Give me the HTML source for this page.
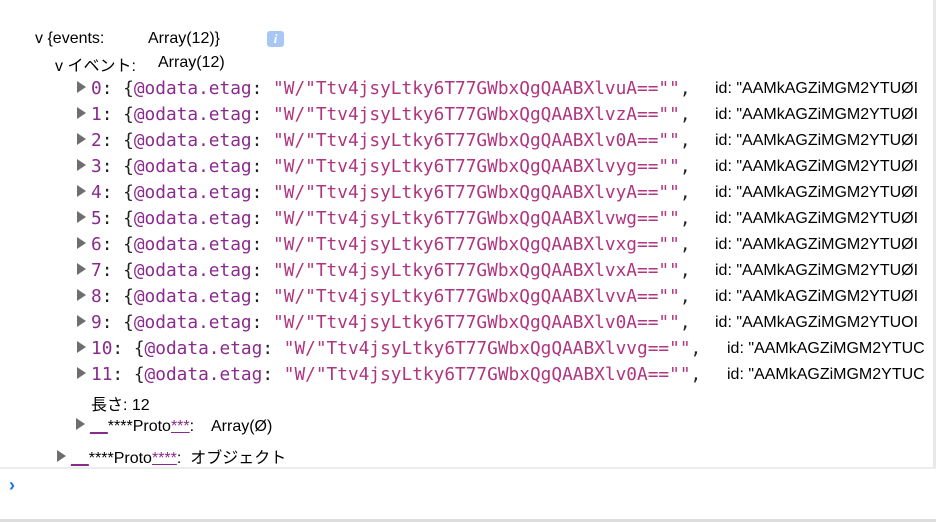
<!DOCTYPE html>
<html><head><meta charset="utf-8"><style>
body{margin:0;width:936px;height:522px;background:#fff;position:relative;overflow:hidden;font-family:"Liberation Sans","Noto Sans CJK JP",sans-serif;color:#000}
.a{position:absolute;white-space:pre}
.s{font-size:16px}
.m{font-family:"DejaVu Sans Mono","Liberation Mono",monospace;font-size:17.8px;color:#222}
.k{color:#8a2a8e}.st{color:#b0357f}
.tri{display:inline-block;width:0;height:0;border-left:9px solid #6e6e6e;border-top:6px solid transparent;border-bottom:6px solid transparent;margin-right:5px;vertical-align:1px}
.id{font-size:16px}
.u{color:#8a2a8e;text-decoration:underline}
</style></head><body>
<div class="a s" style="left:35px;top:30px">v {events:</div>
<div class="a s" style="left:148px;top:30px">Array(12)}</div>
<div style="position:absolute;left:267px;top:31px;width:17px;height:16px;background:#a9c7f5;border-radius:3px;color:#fff;font-size:13px;font-style:italic;text-align:center;line-height:16px;font-family:'Liberation Serif',serif;font-weight:bold">i</div>
<div class="a s" style="left:55px;top:52px">v イベント:</div>
<div class="a s" style="left:158px;top:54px">Array(12)</div>
<div id="rows"></div>
<div class="a s" style="left:91px;top:391px">長さ: 12</div>
<div class="a s" style="left:76px;top:418px"><span class="tri"></span><span class="u">__</span>****Proto<span class="u">***</span>:    Array(Ø)</div>
<div class="a s" style="left:57px;top:444px"><span class="tri"></span><span class="u">__</span>****Proto<span class="u">****</span>:  オブジェクト</div>
<div style="position:absolute;left:0;top:467px;width:936px;height:2px;background:#ececec"></div>
<div class="a" style="left:9px;top:475px;color:#1a73e8;font-size:18px;font-weight:bold">›</div>
<div style="position:absolute;left:0;top:519px;width:936px;height:3px;background:#ddd"></div>
<div style="position:absolute;left:933px;top:0;width:3px;height:467px;background:#e8e8e8"></div>
<script>
var sfx=["uA","zA","0A","yg","yA","wg","xg","xA","vA","0A","vg","0A"];
var h="";
for(var i=0;i<12;i++){
 var y=78+i*26, wide=i>=10;
 h+='<div class="a m" style="left:77px;top:'+y+'px"><span class="tri"></span><span class="k">'+i+'</span>: {<span class="k">@odata.etag</span>: <span class="st">"W/"Ttv4jsyLtky6T77GWbxQgQAABXlv'+sfx[i]+'==""</span>,</div>';
 h+='<div class="a id" style="left:'+(wide?727:715)+'px;top:'+(y+2)+'px">id: "AAMkAGZiMGM2YTU'+(wide?'C':(i==9?'OI':'ØI'))+'</div>';
}
document.getElementById("rows").innerHTML=h;
</script>
</body></html>
